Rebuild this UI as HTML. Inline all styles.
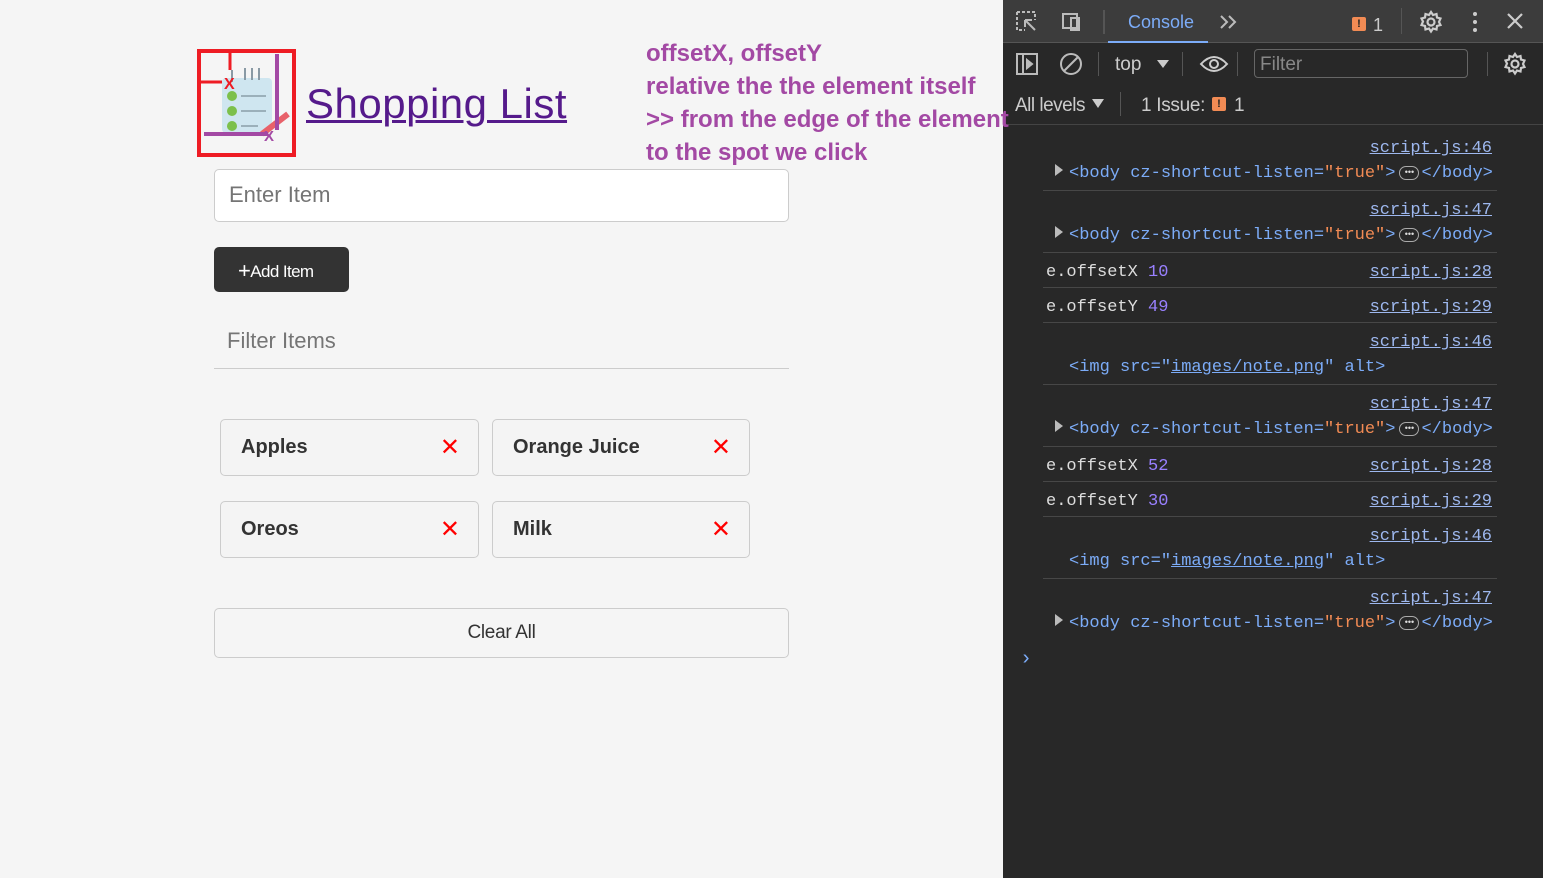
<!DOCTYPE html>
<html><head><meta charset="utf-8"><style>
*{box-sizing:border-box;margin:0;padding:0}
body{width:1543px;height:878px;overflow:hidden;background:#f5f5f5;font-family:"Liberation Sans",sans-serif;position:relative}
.a{position:absolute}
.item{position:absolute;width:259px;height:57px;border:1px solid #ccc;border-radius:5px;background:#f4f4f4;font-weight:bold;font-size:20px;color:#333;padding:16px 0 0 20px}
.item span{position:absolute;right:18px;top:13px;color:#f00;font-weight:normal;font-size:24px}
#dt{position:absolute;left:1003px;top:0;width:540px;height:878px;background:#282828;color:#ccc}
.mono{font-family:"Liberation Mono",monospace;font-size:17px;white-space:pre;position:absolute}
.lnk{color:#9eb8ef;text-decoration:underline;right:51px}
.tag{color:#7cacf8}.str{color:#f28b54}.num{color:#9980ff}
.sep{position:absolute;left:40px;width:454px;height:1px;background:#474747}
.tri{position:absolute;width:0;height:0;border-left:8px solid #bbb;border-top:6px solid transparent;border-bottom:6px solid transparent}
.dots{display:inline-block;width:20px;height:14px;margin:0 2px 0 4px;border:1px solid #aaa;border-radius:7px;vertical-align:2px;text-align:center;font-size:9px;line-height:11px;color:#ddd;font-family:"Liberation Sans",sans-serif}
.note{position:absolute;left:646px;font-family:"Liberation Sans",sans-serif;font-weight:bold;font-size:24px;color:#a349a4;z-index:5;white-space:nowrap;letter-spacing:0px}
</style></head><body>
<svg class="a" style="left:196px;top:48px" width="102" height="110">
<rect x="3" y="3" width="95" height="104" fill="none" stroke="#ee1c24" stroke-width="4"/>
<rect x="26" y="30" width="50" height="55" rx="4" fill="#cfe6f0"/>
<g stroke="#8a9aa5" stroke-width="2"><line x1="36" y1="22" x2="36" y2="34"/><line x1="49" y1="20" x2="49" y2="32"/><line x1="56" y1="20" x2="56" y2="32"/><line x1="63" y1="20" x2="63" y2="32"/></g>
<g fill="#7cc04b"><circle cx="36" cy="48" r="5"/><circle cx="36" cy="63" r="5"/><circle cx="36" cy="78" r="5"/></g>
<g stroke="#9bb0ba" stroke-width="2"><line x1="45" y1="48" x2="70" y2="48"/><line x1="45" y1="63" x2="70" y2="63"/><line x1="45" y1="78" x2="62" y2="78"/></g>
<line x1="66" y1="86" x2="92" y2="66" stroke="#e8616a" stroke-width="6"/>
<line x1="34" y1="4" x2="34" y2="22" stroke="#ee1c24" stroke-width="3"/>
<line x1="4" y1="34" x2="26" y2="34" stroke="#ee1c24" stroke-width="3"/>
<text x="28" y="41" fill="#ee1c24" font-size="16" font-weight="bold" font-family="Liberation Sans">X</text>
<line x1="81" y1="6" x2="81" y2="82" stroke="#a349a4" stroke-width="4"/>
<line x1="8" y1="86" x2="72" y2="86" stroke="#a349a4" stroke-width="4"/>
<text x="68" y="93" fill="#a349a4" font-size="15" font-weight="bold" font-family="Liberation Sans">X</text>
</svg>
<div class="a" style="left:306px;top:80px;font-size:42px;color:#551a8b;text-decoration:underline;text-decoration-thickness:3px;letter-spacing:0.5px">Shopping List</div>
<div class="note" style="top:40px">offsetX, offsetY</div>
<div class="note" style="top:73px">relative the the element itself</div>
<div class="note" style="top:106px">&gt;&gt; from the edge of the element</div>
<div class="note" style="top:139px">to the spot we click</div>

<div class="a" style="left:214px;top:169px;width:575px;height:53px;border:1px solid #ccc;border-radius:5px;background:#fff;font-size:22px;color:#757575;padding:12px 14px">Enter Item</div>
<div class="a" style="left:214px;top:247px;width:135px;height:45px;background:#333;border-radius:5px;color:#fff;font-size:17px;padding:10px 0 0 24px;letter-spacing:-0.6px"><b style="font-size:22px;font-weight:normal;position:relative;top:1px">+</b>Add Item</div>
<div class="a" style="left:214px;top:326px;width:575px;height:43px;border-bottom:1px solid #ccc;font-size:22px;color:#757575;padding:2px 13px">Filter Items</div>
<div class="item" style="left:220px;top:419px">Apples<span>✕</span></div>
<div class="item" style="left:492px;top:419px;width:258px">Orange Juice<span>✕</span></div>
<div class="item" style="left:220px;top:501px">Oreos<span>✕</span></div>
<div class="item" style="left:492px;top:501px;width:258px">Milk<span>✕</span></div>
<div class="a" style="left:214px;top:608px;width:575px;height:50px;border:1px solid #ccc;border-radius:5px;font-size:19px;color:#333;text-align:center;padding-top:13px;letter-spacing:-0.3px">Clear All</div>

<div id="dt">
<div class="a" style="left:0;top:0;width:540px;height:43px;background:#3c3c3c;border-bottom:1px solid #555"></div>
<svg class="a" style="left:12px;top:10px" width="240" height="26" fill="none" stroke="#bbb" stroke-width="2">
<path d="M2 2h18v8M2 2v18h8" stroke-dasharray="3 2"/><path d="M10 10l10 10M10 10h7M10 10v7"/>
<rect x="48" y="4" width="14" height="14"/><rect x="56" y="8" width="8" height="12"/>
<line x1="89" y1="0" x2="89" y2="24" stroke="#555"/>
<path d="M206 6l6 6-6 6M214 6l6 6-6 6"/>
</svg>
<div class="a" style="left:125px;top:12px;font-size:18px;color:#7cacf8">Console</div>
<div class="a" style="left:105px;top:41px;width:100px;height:2px;background:#7cacf8"></div>
<div class="a" style="left:349px;top:17px;width:14px;height:14px;background:#f28b54;border-radius:2px;color:#222;font-size:11px;font-weight:bold;text-align:center;line-height:14px">!</div>
<div class="a" style="left:370px;top:15px;font-size:18px;color:#ccc">1</div>
<div class="a" style="left:398px;top:8px;width:1px;height:26px;background:#555"></div>
<svg class="a" style="left:416px;top:10px" width="24" height="24" fill="none" stroke="#ccc" stroke-width="2.2"><circle cx="12" cy="12" r="3.5"/><path d="M12 2l2 3 3.5-1 .5 3.5 3.5 1-1.5 3.5 1.5 3-3.5 1-.5 3.5-3.5-1-2 3-2-3-3.5 1-.5-3.5-3.5-1 1.5-3.5-1.5-3 3.5-1 .5-3.5 3.5 1z"/></svg>
<svg class="a" style="left:467px;top:10px" width="10" height="24" fill="#ccc"><circle cx="5" cy="4" r="2"/><circle cx="5" cy="12" r="2"/><circle cx="5" cy="20" r="2"/></svg>
<svg class="a" style="left:503px;top:12px" width="18" height="18" stroke="#ccc" stroke-width="2.2"><path d="M2 2l14 14M16 2L2 16"/></svg>
<svg class="a" style="left:12px;top:52px" width="70" height="26" fill="none" stroke="#bbb" stroke-width="2">
<rect x="2" y="2" width="20" height="20"/><line x1="8" y1="2" x2="8" y2="22"/><path d="M12 8l5 4-5 4z" fill="#bbb"/>
<circle cx="56" cy="12" r="10"/><line x1="49" y1="19" x2="63" y2="5"/>
</svg>
<div class="a" style="left:95px;top:52px;width:1px;height:24px;background:#555"></div>
<div class="a" style="left:112px;top:54px;font-size:19px;color:#ccc">top</div>
<div class="a" style="left:154px;top:60px;border-left:6px solid transparent;border-right:6px solid transparent;border-top:8px solid #ccc"></div>
<div class="a" style="left:179px;top:52px;width:1px;height:24px;background:#555"></div>
<svg class="a" style="left:196px;top:54px" width="30" height="20" fill="none" stroke="#ccc" stroke-width="2"><path d="M2 10Q15 -4 28 10Q15 24 2 10z"/><circle cx="15" cy="10" r="4"/></svg>
<div class="a" style="left:234px;top:52px;width:1px;height:24px;background:#555"></div>
<div class="a" style="left:251px;top:49px;width:214px;height:29px;border:1px solid #666;border-radius:4px;font-size:19px;color:#888;padding:4px 5px">Filter</div>
<div class="a" style="left:484px;top:52px;width:1px;height:24px;background:#555"></div>
<svg class="a" style="left:500px;top:52px" width="24" height="24" fill="none" stroke="#ccc" stroke-width="2.2"><circle cx="12" cy="12" r="3.5"/><path d="M12 2l2 3 3.5-1 .5 3.5 3.5 1-1.5 3.5 1.5 3-3.5 1-.5 3.5-3.5-1-2 3-2-3-3.5 1-.5-3.5-3.5-1 1.5-3.5-1.5-3 3.5-1 .5-3.5 3.5 1z"/></svg>
<div class="a" style="left:12px;top:95px;font-size:19px;color:#ccc;letter-spacing:-0.5px">All levels</div>
<div class="a" style="left:89px;top:99px;border-left:6px solid transparent;border-right:6px solid transparent;border-top:9px solid #ccc"></div>
<div class="a" style="left:117px;top:92px;width:1px;height:24px;background:#555"></div>
<div class="a" style="left:138px;top:95px;font-size:19px;color:#ccc;letter-spacing:-0.3px">1 Issue:</div>
<div class="a" style="left:209px;top:97px;width:14px;height:14px;background:#f28b54;border-radius:2px;color:#222;font-size:11px;font-weight:bold;text-align:center;line-height:14px">!</div>
<div class="a" style="left:231px;top:95px;font-size:19px;color:#ccc">1</div>
<div class="a" style="left:0;top:124px;width:540px;height:1px;background:#444"></div>

<div class="mono lnk" style="top:139px">script.js:46</div>
<div class="tri" style="left:52px;top:164px"></div>
<div class="mono" style="left:66px;top:164px"><span class="tag">&lt;body cz-shortcut-listen=</span><span class="str">"true"</span><span class="tag">&gt;</span><span class="dots">•••</span><span class="tag">&lt;/body&gt;</span></div>
<div class="sep" style="top:190px"></div>
<div class="mono lnk" style="top:201px">script.js:47</div>
<div class="tri" style="left:52px;top:226px"></div>
<div class="mono" style="left:66px;top:226px"><span class="tag">&lt;body cz-shortcut-listen=</span><span class="str">"true"</span><span class="tag">&gt;</span><span class="dots">•••</span><span class="tag">&lt;/body&gt;</span></div>
<div class="sep" style="top:252px"></div>
<div class="mono" style="left:43px;top:263px;color:#ddd">e.offsetX <span class="num">10</span></div>
<div class="mono lnk" style="top:263px">script.js:28</div>
<div class="sep" style="top:287px"></div>
<div class="mono" style="left:43px;top:298px;color:#ddd">e.offsetY <span class="num">49</span></div>
<div class="mono lnk" style="top:298px">script.js:29</div>
<div class="sep" style="top:322px"></div>
<div class="mono lnk" style="top:333px">script.js:46</div>
<div class="mono tag" style="left:66px;top:358px">&lt;img src="<u>images/note.png</u>" alt&gt;</div>
<div class="sep" style="top:384px"></div>
<div class="mono lnk" style="top:395px">script.js:47</div>
<div class="tri" style="left:52px;top:420px"></div>
<div class="mono" style="left:66px;top:420px"><span class="tag">&lt;body cz-shortcut-listen=</span><span class="str">"true"</span><span class="tag">&gt;</span><span class="dots">•••</span><span class="tag">&lt;/body&gt;</span></div>
<div class="sep" style="top:446px"></div>
<div class="mono" style="left:43px;top:457px;color:#ddd">e.offsetX <span class="num">52</span></div>
<div class="mono lnk" style="top:457px">script.js:28</div>
<div class="sep" style="top:481px"></div>
<div class="mono" style="left:43px;top:492px;color:#ddd">e.offsetY <span class="num">30</span></div>
<div class="mono lnk" style="top:492px">script.js:29</div>
<div class="sep" style="top:516px"></div>
<div class="mono lnk" style="top:527px">script.js:46</div>
<div class="mono tag" style="left:66px;top:552px">&lt;img src="<u>images/note.png</u>" alt&gt;</div>
<div class="sep" style="top:578px"></div>
<div class="mono lnk" style="top:589px">script.js:47</div>
<div class="tri" style="left:52px;top:614px"></div>
<div class="mono" style="left:66px;top:614px"><span class="tag">&lt;body cz-shortcut-listen=</span><span class="str">"true"</span><span class="tag">&gt;</span><span class="dots">•••</span><span class="tag">&lt;/body&gt;</span></div>
<div class="mono" style="left:17px;top:648px;color:#7cacf8;font-size:20px">›</div>
</div>
</body></html>
